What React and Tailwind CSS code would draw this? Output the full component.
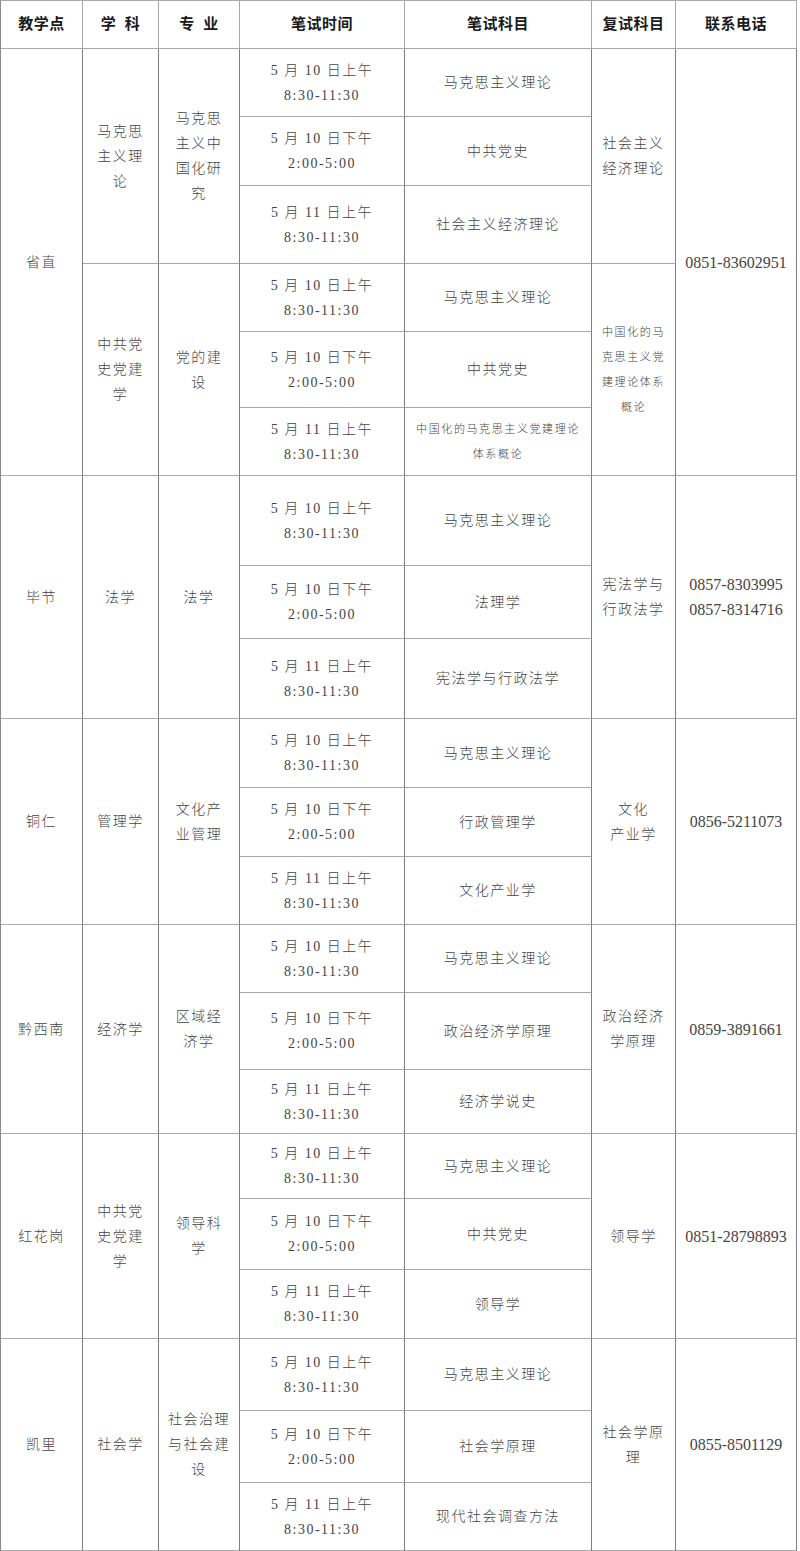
import React from 'react'

// 各教学点考试安排
const times = [
  ['5 月 10 日上午', '8:30-11:30'],
  ['5 月 10 日下午', '2:00-5:00'],
  ['5 月 11 日上午', '8:30-11:30'],
]

const groups = [
  {
    place: '省直',
    phone: ['0851-83602951'],
    majors: [
      {
        xueke: ['马克思', '主义理', '论'],
        zhuanye: ['马克思', '主义中', '国化研', '究'],
        fushi: ['社会主义', '经济理论'],
        subjects: [['马克思主义理论'], ['中共党史'], ['社会主义经济理论']],
      },
      {
        xueke: ['中共党', '史党建', '学'],
        zhuanye: ['党的建', '设'],
        fushi: ['中国化的马', '克思主义党', '建理论体系', '概论'],
        fushiSmall: true,
        subjects: [['马克思主义理论'], ['中共党史'], ['中国化的马克思主义党建理论', '体系概论']],
        lastSmall: true,
      },
    ],
  },
  {
    place: '毕节',
    phone: ['0857-8303995', '0857-8314716'],
    majors: [{ xueke: ['法学'], zhuanye: ['法学'], fushi: ['宪法学与', '行政法学'], subjects: [['马克思主义理论'], ['法理学'], ['宪法学与行政法学']] }],
  },
  {
    place: '铜仁',
    phone: ['0856-5211073'],
    majors: [{ xueke: ['管理学'], zhuanye: ['文化产', '业管理'], fushi: ['文化', '产业学'], subjects: [['马克思主义理论'], ['行政管理学'], ['文化产业学']] }],
  },
  {
    place: '黔西南',
    phone: ['0859-3891661'],
    majors: [{ xueke: ['经济学'], zhuanye: ['区域经', '济学'], fushi: ['政治经济', '学原理'], subjects: [['马克思主义理论'], ['政治经济学原理'], ['经济学说史']] }],
  },
  {
    place: '红花岗',
    phone: ['0851-28798893'],
    majors: [{ xueke: ['中共党', '史党建', '学'], zhuanye: ['领导科', '学'], fushi: ['领导学'], subjects: [['马克思主义理论'], ['中共党史'], ['领导学']] }],
  },
  {
    place: '凯里',
    phone: ['0855-8501129'],
    majors: [{ xueke: ['社会学'], zhuanye: ['社会治理', '与社会建', '设'], fushi: ['社会学原', '理'], subjects: [['马克思主义理论'], ['社会学原理'], ['现代社会调查方法']] }],
  },
]

const font = 'font-["Liberation_Serif","Noto_Sans_CJK_SC",serif]'

function Cell({ lines, span, small, phone }) {
  const spanCls = span === 6 ? 'row-span-6' : span === 3 ? 'row-span-3' : ''
  const textCls = phone
    ? 'text-[16px] leading-[25px] tracking-normal'
    : small
    ? 'text-[11px] leading-[25px] tracking-[1.6px]'
    : 'text-[14px] leading-[25px] tracking-[1.5px]'
  return (
    <div className={`${spanCls} flex flex-col items-center justify-center border-r border-b border-r-[#7f7f7f] border-b-[#a9a9a9] text-center text-[#444] font-light ${textCls}`}>
      {lines.map((l, i) => (
        <div key={i} className="whitespace-pre">{l}</div>
      ))}
    </div>
  )
}

function Head({ children }) {
  return (
    <div className="flex items-center justify-center border-r border-b border-[#a9a9a9] text-[15px] font-bold text-[#1a1a1a] tracking-[0.5px] whitespace-pre">
      {children}
    </div>
  )
}

export default function App() {
  return (
    <div className={`w-[800px] bg-white ${font}`}>
      <div className="grid w-[797px] grid-cols-[82px_76px_81px_165px_187px_84px_121px] grid-rows-[48px_68px_69px_78px_68px_76px_68px_90px_73px_80px_69px_69px_68px_68px_77px_64px_65px_71px_69px_72px_72px_68px] border-t border-l border-t-[#a9a9a9] border-l-[#8a8a8a]">
        <Head>教学点</Head>
        <Head>学  科</Head>
        <Head>专  业</Head>
        <Head>笔试时间</Head>
        <Head>笔试科目</Head>
        <Head>复试科目</Head>
        <Head>联系电话</Head>

        {groups.map((g) =>
          g.majors.map((m, mi) => (
            <React.Fragment key={g.place + mi}>
              {times.map((t, ti) => (
                <React.Fragment key={ti}>
                  {ti === 0 && mi === 0 && <Cell lines={[g.place]} span={g.majors.length * 3 === 6 ? 6 : 3} />}
                  {ti === 0 && <Cell lines={m.xueke} span={3} />}
                  {ti === 0 && <Cell lines={m.zhuanye} span={3} />}
                  <Cell lines={t} />
                  <Cell lines={m.subjects[ti]} small={ti === 2 && m.lastSmall} />
                  {ti === 0 && <Cell lines={m.fushi} span={3} small={m.fushiSmall} />}
                  {ti === 0 && mi === 0 && <Cell lines={g.phone} span={g.majors.length * 3 === 6 ? 6 : 3} phone />}
                </React.Fragment>
              ))}
            </React.Fragment>
          ))
        )}
      </div>
    </div>
  )
}
